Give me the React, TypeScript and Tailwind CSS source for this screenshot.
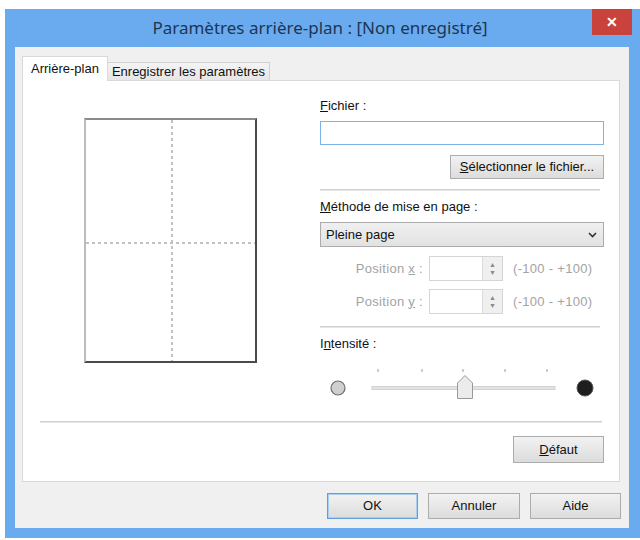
import React from 'react'

const font = "font-['Liberation_Sans',Arial,sans-serif]"

function Btn({ children, w, primary }: { children: React.ReactNode; w: string; primary?: boolean }) {
  return (
    <div
      className={`${w} flex h-[26px] items-center justify-center border bg-gradient-to-b from-[#f2f2f2] to-[#dcdcdc] text-[13px] text-[#111] ${
        primary ? 'border-[#5fa0dc] shadow-[inset_0_0_0_1px_#a9cff2]' : 'border-[#acacac]'
      }`}
    >
      {children}
    </div>
  )
}

function Separator({ className }: { className: string }) {
  return <div className={`h-[2px] border-t border-[#cfcfcf] bg-[#e6e6e6] ${className}`} />
}

function PosRow({ axis }: { axis: string }) {
  return (
    <div className="flex h-[25px] items-center text-[13px] tracking-[0.3px] text-[#a3a3a3]">
      <div className="w-[105px] pr-[2px] text-right">
        Position <span className="underline">{axis}</span> :
      </div>
      <div className="ml-[4px] flex h-[25px] w-[74px] border border-[#d5d5d5] bg-white">
        <div className="flex-1" />
        <div className="flex w-[20px] flex-col items-center justify-center border-l border-[#dcdcdc] bg-[#f0f0f0] text-[7px] leading-[8px] text-[#8a8a8a]">
          <span>▲</span>
          <span>▼</span>
        </div>
      </div>
      <div className="ml-[10px]">(-100 - +100)</div>
    </div>
  )
}

function Slider() {
  const ticks = [58, 102, 143, 185, 227]
  return (
    <svg width="284" height="40" className="mt-[12px] block">
      <circle cx="18" cy="25" r="7" fill="#cfcfcf" stroke="#6d6d6d" strokeWidth="1.2" />
      {ticks.map((x) => (
        <line key={x} x1={x} y1="6" x2={x} y2="9" stroke="#9a9a9a" strokeWidth="1" />
      ))}
      <rect x="52" y="23.5" width="183" height="3" fill="#e3e3e3" stroke="#d2d2d2" strokeWidth="1" />
      <path d="M137.5 35.5 V20 L145 12.5 L152.5 20 V35.5 Z" fill="#ececec" stroke="#9a9a9a" strokeWidth="1" />
      <circle cx="265" cy="25" r="8" fill="#1e1e1e" stroke="#555" strokeWidth="1" />
    </svg>
  )
}

export default function App() {
  return (
    <div className={`${font} h-[540px] w-[640px] overflow-hidden bg-white pl-[5px] pt-[9px]`}>
      <div className="flex h-[529px] w-[635px] flex-col bg-[#6aabf0]">
        {/* Title bar */}
        <div className="relative flex h-[38px] items-center justify-center pr-[5px]">
          <span className="font-['Noto_Sans',sans-serif] text-[17px] text-[#1d3650]">
            Paramètres arrière-plan : [Non enregistré]
          </span>
          <div className="absolute right-[8px] top-0 flex h-[26px] w-[40px] items-center justify-center bg-[#c9433c] text-[14px] font-bold text-white">
            ✕
          </div>
        </div>

        <div className="mb-[10px] ml-[10px] mr-[11px] flex flex-1 flex-col bg-[#f0f0f0] px-[7px] pt-[9px]">
          {/* Tabs */}
          <div className="relative z-10 flex h-[25px] items-end">
            <div className="flex h-[25px] w-[86px] items-center justify-center border border-b-0 border-[#d9d9d9] bg-white text-[13px] text-[#111]">
              Arrière-plan
            </div>
            <div className="mb-[1px] flex h-[18px] w-[162px] items-center justify-center border border-b-0 border-l-0 border-[#d0d0d0] bg-gradient-to-b from-[#f4f4f4] to-[#e6e6e6] text-[13px] text-[#111]">
              Enregistrer les paramètres
            </div>
          </div>

          {/* Panel */}
          <div className="-mt-[1px] flex h-[402px] w-[598px] flex-col border border-[#d9d9d9] bg-white">
            <div className="flex pt-[18px]">
              <div className="w-[297px]">
                <div className="relative ml-[61px] mt-[19px] h-[245px] w-[173px] border-2 border-b-[#4a4a4a] border-l-[#bdbdbd] border-r-[#4a4a4a] border-t-[#8a8a8a]">
                  <div className="absolute bottom-0 left-[85px] top-0 w-[2px] bg-[repeating-linear-gradient(to_bottom,#c2c2c2_0_3px,transparent_3px_6px)]" />
                  <div className="absolute left-0 right-0 top-[122px] h-[2px] bg-[repeating-linear-gradient(to_right,#c2c2c2_0_3px,transparent_3px_6px)]" />
                </div>
              </div>

              <div className="flex w-[284px] flex-col text-[13px] text-[#111]">
                <div className="h-[14px] leading-[14px]">
                  <span className="underline">F</span>ichier :
                </div>
                <div className="mt-[8px] h-[24px] border border-[#7eb4ea] bg-white" />
                <div className="mt-[10px] self-end">
                  <div className="flex h-[24px] w-[154px] items-center justify-center border border-[#acacac] bg-gradient-to-b from-[#f2f2f2] to-[#dcdcdc]">
                    <span className="underline">S</span>électionner le fichier...
                  </div>
                </div>
                <Separator className="mt-[10px] w-[280px]" />
                <div className="mt-[9px] h-[14px] leading-[14px]">
                  <span className="underline">M</span>éthode de mise en page :
                </div>
                <div className="mt-[8px] flex h-[25px] items-center justify-between border border-[#acacac] bg-gradient-to-b from-[#f0f0f0] to-[#e2e2e2] pl-[5px] pr-[6px]">
                  <span>Pleine page</span>
                  <svg width="9" height="6" viewBox="0 0 9 6">
                    <path d="M1 1 L4.5 4.5 L8 1" fill="none" stroke="#333" strokeWidth="1.6" />
                  </svg>
                </div>
                <div className="mt-[9px]">
                  <PosRow axis="x" />
                </div>
                <div className="mt-[8px]">
                  <PosRow axis="y" />
                </div>
                <Separator className="mt-[12px] w-[280px]" />
                <div className="mt-[9px] h-[14px] leading-[14px]">
                  I<span className="underline">n</span>tensité :
                </div>
                <Slider />
              </div>
            </div>

            <Separator className="ml-[17px] mt-[18px] w-[562px]" />

            <div className="mr-[15px] mt-[13px] flex justify-end">
              <div className="flex h-[27px] w-[91px] items-center justify-center border border-[#acacac] bg-gradient-to-b from-[#f2f2f2] to-[#dcdcdc] text-[13px] text-[#111]">
                <span className="underline">D</span>éfaut
              </div>
            </div>
          </div>

          {/* Dialog buttons */}
          <div className="mr-[1px] mt-[11px] flex justify-end gap-[10px]">
            <Btn w="w-[91px]" primary>OK</Btn>
            <Btn w="w-[92px]">Annuler</Btn>
            <Btn w="w-[91px]">Aide</Btn>
          </div>
        </div>
      </div>
    </div>
  )
}
